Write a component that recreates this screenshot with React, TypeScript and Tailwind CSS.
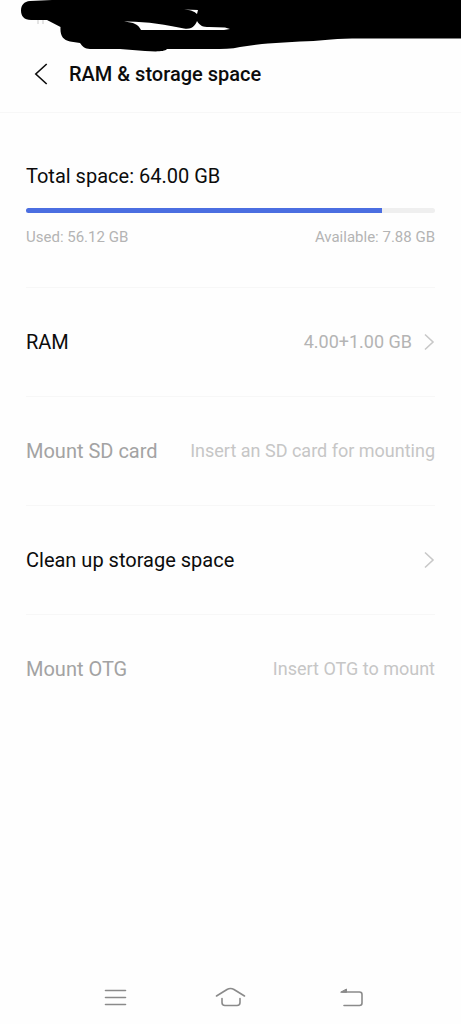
import type { ReactNode } from "react";

const storage = { total: 64, used: 56.12 };

type Row = {
  label: string;
  value?: string;
  disabled?: boolean;
};

const rows: Row[] = [
  { label: "RAM", value: "4.00+1.00 GB" },
  { label: "Mount SD card", value: "Insert an SD card for mounting", disabled: true },
  { label: "Clean up storage space" },
  { label: "Mount OTG", value: "Insert OTG to mount", disabled: true },
];

export default function App() {
  return (
    <div className="flex min-h-screen flex-col bg-[#fefefe] font-[Roboto,sans-serif] text-[#0c0c0c]">
      <StatusBar />
      <header className="flex h-[77px] items-center border-b border-[#f7f7f7] pl-[26px]">
        <button type="button" aria-label="Back" className="flex w-[43px] pl-2">
          <svg width="14" height="22" viewBox="0 0 14 22" fill="none" stroke="currentColor" strokeWidth="1.6">
            <path d="M12.7 1 1.8 11l10.9 10" />
          </svg>
        </button>
        <h1 className="text-[20px] leading-6 font-medium">RAM &amp; storage space</h1>
      </header>

      <main className="flex-1 px-[26px]">
        <StorageSummary />
        <ul>
          {rows.map((row) => (
            <SettingRow key={row.label} row={row} />
          ))}
        </ul>
      </main>

      <NavBar />
    </div>
  );
}

function StatusBar() {
  return (
    <div className="relative h-9">
      <svg className="pointer-events-none absolute inset-x-0 top-0 w-full" viewBox="0 0 461 54" aria-hidden="true">
        <path d="M37 20h2v4h-2zM42 20h2v4h-2z" fill="#e4e4e4" />
        <path d="M30 1 52 0H461V38.500H352C330 39 320 41 300 41.500L268 43.500 262 44 240 47C232 49 222 49 212 49H167C164 52 155 51.500 145 51L120 49H90C85 49 82 46 80 43L70 41.500C63 40 60 36 60.500 27L47 20H31C24 20 21 16 21 10.500 21 5 24 1.500 30 1Z" />
        <path d="M124 21.500C145 21 166 25 184 28.500 193 30 196 24 197 21 200 26 203 27 209 27L225 27.500 230 29 224 30H141C138 24 134 22.500 124 21.500ZM184 9.500 198 10 197 14C194 11 190 10 184 9.500Z" fill="#fefefe" />
      </svg>
    </div>
  );
}

function StorageSummary() {
  const available = storage.total - storage.used;
  return (
    <section className="border-b border-[#f7f7f7] pt-[51px] pb-10">
      <h2 id="total-space" className="text-[20px] leading-6">
        Total space: {storage.total.toFixed(2)} GB
      </h2>
      <div
        role="progressbar"
        aria-labelledby="total-space"
        aria-valuenow={storage.used}
        aria-valuemax={storage.total}
        className="mt-5 h-[5px] overflow-hidden rounded-full bg-[#efefef]"
      >
        <div
          className="h-full bg-[#4b6ee1]"
          style={{ width: `${((storage.used - 0.4) / storage.total) * 100}%` }}
        />
      </div>
      <div className="mt-[14px] flex justify-between text-[15px] leading-5 text-[#b4b4b4]">
        <span>Used: {storage.used.toFixed(2)} GB</span>
        <span>Available: {available.toFixed(2)} GB</span>
      </div>
    </section>
  );
}

function SettingRow({ row }: { row: Row }) {
  return (
    <li className="border-b border-[#f7f7f7] last:border-transparent">
      <button
        type="button"
        disabled={row.disabled}
        className="flex h-[108px] w-full items-center justify-between text-left disabled:text-[#a3a3a3]"
      >
        <span className="text-[20px] leading-6">{row.label}</span>
        <span className="flex items-center gap-3">
          {row.value && (
            <span className={row.disabled ? "text-[18px] leading-6 text-[#c6c6c6]" : "text-[18px] leading-6 text-[#b4b4b4]"}>
              {row.value}
            </span>
          )}
          {!row.disabled && (
            <svg width="11" height="18" viewBox="0 0 11 18" fill="none" stroke="#c8c8c8" strokeWidth="1.6">
              <path d="M1 1.500 9 9 1 16.500" />
            </svg>
          )}
        </span>
      </button>
    </li>
  );
}

function NavBar() {
  return (
    <nav className="grid h-[54px] grid-cols-3 px-[52px]">
      <NavButton label="Recent apps">
        <path d="M11.500 11.500h20M11.500 18.500h20M11.500 25.500h20" />
      </NavButton>
      <NavButton label="Home">
        <path d="m3.500 17 10.500-6.500q3.500-2 7 0l10.500 6.500" />
        <path d="M9 19.500v4q0 3 3 3h12q3 0 3-3v-4" />
      </NavButton>
      <NavButton label="Back">
        <path d="M12 26.500h15.500q2.500 0 2.500-2.500v-8.500q0-2.500-2.500-2.500H10" />
        <path d="M9 13 14.500 10v3Z" fill="#8a8a8a" strokeWidth="1" />
      </NavButton>
    </nav>
  );
}

function NavButton({ label, children }: { label: string; children: ReactNode }) {
  return (
    <button type="button" aria-label={label} className="flex items-center justify-center">
      <svg width="36" height="36" viewBox="0 0 36 36" fill="none" stroke="#8a8a8a" strokeWidth="1.6" strokeLinecap="round">
        {children}
      </svg>
    </button>
  );
}
